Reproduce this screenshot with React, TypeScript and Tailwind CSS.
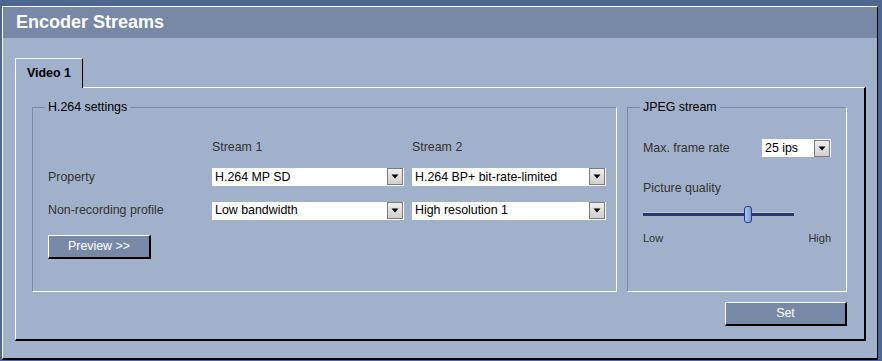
import React from 'react'

const font = { fontFamily: '"Liberation Sans", Arial, sans-serif' }

// fake windows-ish dropdown
const Select = ({ value, width }: { value: string; width: string }) => (
    <div className={`flex h-[18px] items-center bg-white ${width}`}>
        <span className="flex-1 truncate pl-[3px] text-[12.4px] leading-none text-black">{value}</span>
        <span className="mr-[1px] flex h-[17px] w-[16px] items-center justify-center border border-[#7c7c7c] bg-gradient-to-b from-[#eeeeee] to-[#cfcfcf]">
            <svg width="8" height="5" viewBox="0 0 8 5"><path d="M0.5 0.5h7L4 4.5z" fill="#000" /></svg>
        </span>
    </div>
)

const Button = ({ label, width }: { label: string; width: string }) => (
    <button className={`h-[24px] border-t border-l border-t-white border-l-white border-b-2 border-r-2 border-b-black border-r-black bg-[#7889a8] text-[12.4px] text-white ${width}`}>
        {label}
    </button>
)

const App = () => {
    return (
        <div className="h-[361px] w-[882px] bg-[#4f6690] pt-[6px] pb-[1px] pl-[2px] pr-[4px]" style={font}>
            <div className="flex h-full flex-col border-t border-l border-t-white border-l-white border-b-2 border-r border-b-black border-r-black bg-[#a1b1cb]">
                {/* title bar */}
                <div className="flex h-[31px] items-center bg-[#7889a8] pl-[13px] text-[18px] font-bold text-white">
                    Encoder Streams
                </div>

                <div className="px-[12px] pt-[20px]">
                    {/* tab */}
                    <div className="relative z-10 -mb-px flex h-[30px] w-[68px] items-center justify-center border-t border-l border-r border-t-white border-l-white border-r-black bg-[#a1b1cb] text-[12.4px] font-bold text-black">
                        Video 1
                    </div>

                    {/* tab panel */}
                    <div className="h-[254px] w-[851px] border-t border-l border-t-white border-l-white border-b-2 border-r-2 border-b-black border-r-black px-[16px] pt-[12px]">
                        <div className="flex gap-[10px]">
                            <fieldset className="h-[192px] w-[585px] border border-t-[#7a8bab] border-l-[#7a8bab] border-b-white border-r-white p-0">
                                <legend className="ml-[12px] px-[3px] text-[12.4px] leading-[14px] text-black">H.264 settings</legend>
                                <div className="grid grid-cols-[164px_200px_194px] items-center pl-[15px] text-[12.4px] text-[#333]">
                                    <div className="h-[16px]" />
                                    <div className="pt-[24px] pb-[11px]">Stream 1</div>
                                    <div className="pt-[24px] pb-[11px]">Stream 2</div>

                                    <div>Property</div>
                                    <Select value="H.264 MP SD" width="w-[192px]" />
                                    <Select value="H.264 BP+ bit-rate-limited" width="w-[194px]" />

                                    <div className="col-span-3 h-[15px]" />

                                    <div>Non-recording profile</div>
                                    <Select value="Low bandwidth" width="w-[192px]" />
                                    <Select value="High resolution 1" width="w-[194px]" />
                                </div>
                                <div className="pl-[15px] pt-[13px]">
                                    <Button label="Preview >>" width="w-[103px]" />
                                </div>
                            </fieldset>

                            <fieldset className="h-[192px] w-[220px] border border-t-[#7a8bab] border-l-[#7a8bab] border-b-white border-r-white p-0">
                                <legend className="ml-[12px] px-[3px] text-[12.4px] leading-[14px] text-black">JPEG stream</legend>
                                <div className="px-[15px] text-[12.4px] text-[#333]">
                                    <div className="flex items-center justify-between pt-[25px]">
                                        <span>Max. frame rate</span>
                                        <Select value="25 ips" width="w-[69px]" />
                                    </div>
                                    <div className="pt-[21px]">Picture quality</div>
                                    <div className="relative mt-[9px] h-[17px] w-[151px]">
                                        <div className="absolute top-[6px] left-0 h-[4px] w-full border-t border-t-[#c9c9c9] bg-[#2c3672]" />
                                        <div className="absolute top-0 left-[101px] h-[17px] w-[8px] rounded-[3px] border border-[#23388a] bg-gradient-to-r from-[#a9c4ee] to-[#7c9fd6]" />
                                    </div>
                                    <div className="flex justify-between pt-[7px] text-[11px]">
                                        <span>Low</span>
                                        <span>High</span>
                                    </div>
                                </div>
                            </fieldset>
                        </div>

                        <div className="flex w-[815px] justify-end pt-[10px]">
                            <Button label="Set" width="w-[122px]" />
                        </div>
                    </div>
                </div>
            </div>
        </div>
    )
}

export default App
